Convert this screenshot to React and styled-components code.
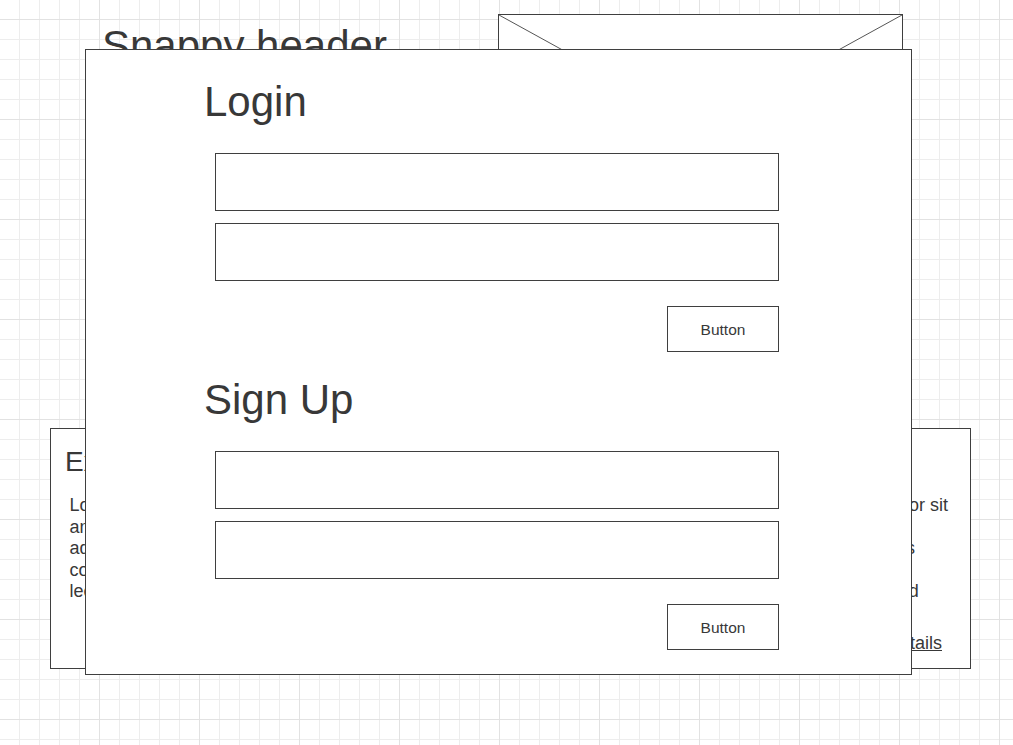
import React from 'react';
import styled, { createGlobalStyle } from 'styled-components';

const GlobalStyle = createGlobalStyle`
  html, body {
    margin: 0;
    padding: 0;
    height: 100%;
  }
  body {
    font-family: "Liberation Sans", Arial, Helvetica, sans-serif;
    color: #383838;
    background-color: #fff;
    background-image:
      linear-gradient(to right, #e2e2e2 1px, transparent 1px),
      linear-gradient(to bottom, #e2e2e2 1px, transparent 1px),
      linear-gradient(to right, #ededed 1px, transparent 1px),
      linear-gradient(to bottom, #ededed 1px, transparent 1px);
    background-size: 100px 100px, 100px 100px, 20px 20px, 20px 20px;
    background-position: 99px 0, 0 19px, 19px 0, 0 19px;
    overflow: hidden;
  }
`;

const Page = styled.div`
  position: relative;
  width: 1013px;
  height: 745px;
  box-sizing: border-box;
  padding: 14px 0 0 50px;
`;

const Hero = styled.header`
  display: flex;
  justify-content: space-between;
  align-items: flex-start;
  width: 921px;
  box-sizing: border-box;
  padding: 0 68px 0 52px;
`;

const SiteTitle = styled.h1`
  margin: 7.5px 0 0;
  font-size: 42px;
  font-weight: normal;
  line-height: 48px;
`;

const ImageBox = styled.div`
  width: 405px;
  height: 224px;
  box-sizing: border-box;
  border: 1px solid #3f3f3f;
  background: #fff;

  svg {
    display: block;
    width: 100%;
    height: 100%;
  }
`;

const Card = styled.section`
  display: flex;
  flex-direction: column;
  margin-top: 190px;
  width: 921px;
  height: 241px;
  box-sizing: border-box;
  padding: 17px 28px 13px 14px;
  border: 1px solid #3f3f3f;
  background: #fff;
`;

const CardTitle = styled.h2`
  margin: 0;
  font-size: 28px;
  font-weight: normal;
  line-height: 32px;
`;

const CardText = styled.p`
  margin: 17px 0 0;
  padding-left: 4.5px;
  font-size: 18px;
  line-height: 21.6px;

  span {
    display: block;
    white-space: nowrap;
  }
`;

const CardLink = styled.a`
  margin-top: auto;
  align-self: flex-end;
  font-size: 18px;
  line-height: 21.6px;
  color: #383838;
  text-decoration: underline;
`;

const Modal = styled.div`
  position: absolute;
  top: 49px;
  left: 85px;
  width: 827px;
  height: 626px;
  box-sizing: border-box;
  padding: 28px 132px 0 118px;
  border: 1px solid #3f3f3f;
  background: #fff;
`;

const FormSection = styled.form`
  display: flex;
  flex-direction: column;

  & + & {
    margin-top: 24px;
  }
`;

const FormTitle = styled.h2`
  margin: 0;
  font-size: 42px;
  font-weight: normal;
  line-height: 48px;
`;

const Fields = styled.div`
  display: flex;
  flex-direction: column;
  gap: 12px;
  margin: 27px 0 0 11px;
`;

const Field = styled.input`
  display: block;
  height: 58px;
  box-sizing: border-box;
  padding: 0 12px;
  border: 1px solid #3f3f3f;
  border-radius: 0;
  background: #fff;
  font: 16px "Liberation Sans", Arial, sans-serif;
  color: #383838;
  outline: none;
`;

const Button = styled.button`
  align-self: flex-end;
  margin-top: 25px;
  width: 112px;
  height: 46px;
  box-sizing: border-box;
  padding: 1px 0 0;
  border: 1px solid #3f3f3f;
  border-radius: 0;
  background: #fff;
  font: 15.5px "Liberation Sans", Arial, sans-serif;
  color: #383838;
  cursor: pointer;
`;

const lines = [
  'Lorem ipsum dolor sit amet, consectetur adipiscing elit, sed do eiusmod tempor incididunt id labore el, dolor sit',
  'amet, consectetur adipiscing elit, sed do eiusmod tempor incididunt ut labore et dolore magna aliqua.',
  'ad minim veniam, quis nostrud exercitation ullamco laboris nisi sit aliquip ex ea commodo consequat. Duis',
  'commodo consequat. Duis aute irure dolor in reprehenderit in voluptate velit esse cillum dolore eu fugiat',
  'lectus nulla pariatur, excepteur sint occaecat cupidatat non proident, sunt in culpa qui officia deserunt quod',
];

const AuthForm = ({ title }) => (
  <FormSection onSubmit={(e) => e.preventDefault()}>
    <FormTitle>{title}</FormTitle>
    <Fields>
      <Field type="text" aria-label={`${title} username`} />
      <Field type="password" aria-label={`${title} password`} />
    </Fields>
    <Button type="submit">Button</Button>
  </FormSection>
);

export default function App() {
  return (
    <>
      <GlobalStyle />
      <Page>
        <Hero>
          <SiteTitle>Snappy header</SiteTitle>
          <ImageBox>
            <svg viewBox="0 0 403 222" preserveAspectRatio="none">
              <line x1="0" y1="0" x2="403" y2="222" stroke="#555" strokeWidth="1" />
              <line x1="403" y1="0" x2="0" y2="222" stroke="#555" strokeWidth="1" />
            </svg>
          </ImageBox>
        </Hero>

        <Card>
          <CardTitle>Example heading</CardTitle>
          <CardText>
            {lines.map((l) => (
              <span key={l}>{l}</span>
            ))}
          </CardText>
          <CardLink href="#">View details</CardLink>
        </Card>

        <Modal>
          <AuthForm title="Login" />
          <AuthForm title="Sign Up" />
        </Modal>
      </Page>
    </>
  );
}
